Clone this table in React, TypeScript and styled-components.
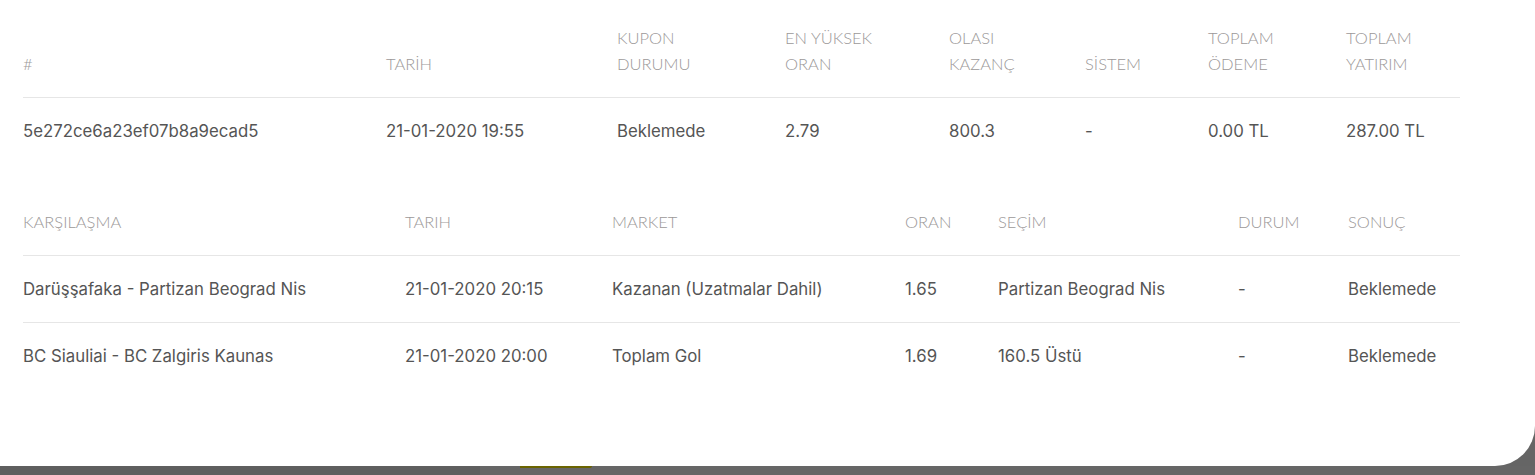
import React from "react";
import styled, { createGlobalStyle } from "styled-components";

const GlobalStyle = createGlobalStyle`
  html, body { margin: 0; padding: 0; }
  body {
    background: #656565;
    font-family: "Inter", "Noto Sans", sans-serif;
    -webkit-font-smoothing: antialiased;
  }
`;

const Panel = styled.main`
  box-sizing: border-box;
  height: 466px;
  background: #ffffff;
  border-bottom-right-radius: 40px;
  padding: 5px 0 0 23px;
  display: flex;
  flex-direction: column;
  gap: 25px;
`;

const Table = styled.table`
  width: 1437px;
  table-layout: fixed;
  border-collapse: collapse;
`;

const HeadCell = styled.th`
  text-align: left;
  vertical-align: bottom;
  padding: 20px 0;
  font-family: "Lato", "Open Sans", sans-serif;
  font-weight: 300;
  font-size: 16.5px;
  line-height: 26px;
  color: #9c9999;
  text-transform: uppercase;
  border-bottom: 1px solid #e6e6e6;
  white-space: nowrap;
`;

const Row = styled.tr<{ $last?: boolean }>`
  border-bottom: ${(p) => (p.$last ? "none" : "1px solid #e6e6e6")};
`;

const Cell = styled.td`
  padding: 20px 0;
  font-size: 16.8px;
  line-height: 26px;
  font-weight: 400;
  color: #555555;
  white-space: nowrap;
`;

const Footer = styled.footer`
  height: 9px;
  display: flex;
  background: #666666;
`;

const FooterShade = styled.div`
  width: 480px;
  background: #5f5f5f;
`;

const FooterSpacer = styled.div`
  width: 40px;
`;

const Indicator = styled.div`
  width: 72px;
  height: 2px;
  background: #6b6400;
  border-bottom-right-radius: 4px;
`;

const couponCols = [363, 231, 168, 164, 136, 123, 138, 114];
const couponHead = [
  ["#"],
  ["Tarİh"],
  ["Kupon", "Durumu"],
  ["En Yüksek", "Oran"],
  ["Olası", "Kazanç"],
  ["Sİstem"],
  ["Toplam", "Ödeme"],
  ["Toplam", "Yatırım"],
];
const couponRow = [
  "5e272ce6a23ef07b8a9ecad5",
  "21-01-2020 19:55",
  "Beklemede",
  "2.79",
  "800.3",
  "-",
  "0.00 TL",
  "287.00 TL",
];

const matchCols = [382, 207, 293, 93, 240, 110, 112];
const matchHead = ["KARŞILAŞMA", "TARIH", "MARKET", "ORAN", "SEÇİM", "DURUM", "SONUÇ"];
const matchRows = [
  [
    "Darüşşafaka - Partizan Beograd Nis",
    "21-01-2020 20:15",
    "Kazanan (Uzatmalar Dahil)",
    "1.65",
    "Partizan Beograd Nis",
    "-",
    "Beklemede",
  ],
  [
    "BC Siauliai - BC Zalgiris Kaunas",
    "21-01-2020 20:00",
    "Toplam Gol",
    "1.69",
    "160.5 Üstü",
    "-",
    "Beklemede",
  ],
];

export default function App() {
  return (
    <>
      <GlobalStyle />
      <Panel>
        <Table>
          <colgroup>
            {couponCols.map((w, i) => (
              <col key={i} style={{ width: w }} />
            ))}
          </colgroup>
          <thead>
            <tr>
              {couponHead.map((lines, i) => (
                <HeadCell key={i}>
                  {lines.map((l, j) => (
                    <React.Fragment key={j}>
                      {j > 0 && <br />}
                      {l.toLocaleUpperCase("tr")}
                    </React.Fragment>
                  ))}
                </HeadCell>
              ))}
            </tr>
          </thead>
          <tbody>
            <Row $last>
              {couponRow.map((v, i) => (
                <Cell key={i}>{v}</Cell>
              ))}
            </Row>
          </tbody>
        </Table>
        <Table>
          <colgroup>
            {matchCols.map((w, i) => (
              <col key={i} style={{ width: w }} />
            ))}
          </colgroup>
          <thead>
            <tr>
              {matchHead.map((h, i) => (
                <HeadCell key={i}>{h}</HeadCell>
              ))}
            </tr>
          </thead>
          <tbody>
            {matchRows.map((r, i) => (
              <Row key={i} $last={i === matchRows.length - 1}>
                {r.map((v, j) => (
                  <Cell key={j}>{v}</Cell>
                ))}
              </Row>
            ))}
          </tbody>
        </Table>
      </Panel>
      <Footer>
        <FooterShade />
        <FooterSpacer />
        <Indicator />
      </Footer>
    </>
  );
}
